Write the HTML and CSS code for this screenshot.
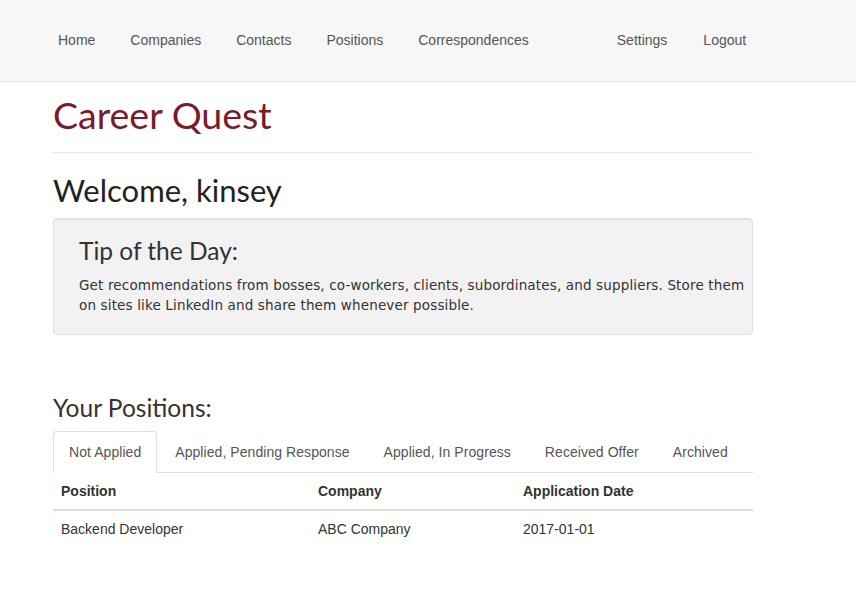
FILE: index.html
```html
<!DOCTYPE html>
<html>
<head>
<meta charset="utf-8">
<title>Career Quest</title>
<link rel="stylesheet" href="styles.css">
</head>
<body>
<nav class="navbar">
  <ul class="nav-left">
    <li><a href="#">Home</a></li>
    <li><a href="#">Companies</a></li>
    <li><a href="#">Contacts</a></li>
    <li><a href="#">Positions</a></li>
    <li><a href="#">Correspondences</a></li>
  </ul>
  <ul class="nav-right">
    <li><a href="#">Settings</a></li>
    <li><a href="#">Logout</a></li>
  </ul>
</nav>
<main class="container">
  <h1 class="brand">Career Quest</h1>
  <hr class="rule">
  <h2 class="welcome">Welcome, kinsey</h2>
  <section class="well">
    <h3 class="well-title">Tip of the Day:</h3>
    <p class="tip">Get recommendations from bosses, co-workers, clients, subordinates, and suppliers. Store them on sites like LinkedIn and share them whenever possible.</p>
  </section>
  <h3 class="section-title">Your Positions:</h3>
  <ul class="tabs">
    <li class="tab active"><a href="#">Not Applied</a></li>
    <li class="tab"><a href="#">Applied, Pending Response</a></li>
    <li class="tab"><a href="#">Applied, In Progress</a></li>
    <li class="tab"><a href="#">Received Offer</a></li>
    <li class="tab"><a href="#">Archived</a></li>
  </ul>
  <table class="table">
    <thead>
      <tr><th class="col-pos">Position</th><th class="col-co">Company</th><th>Application Date</th></tr>
    </thead>
    <tbody>
      <tr><td>Backend Developer</td><td>ABC Company</td><td>2017-01-01</td></tr>
    </tbody>
  </table>
</main>
</body>
</html>
```
FILE: styles.css
```css
* { box-sizing: border-box; }
html, body { margin: 0; padding: 0; }
body {
  font-family: "Liberation Sans", Arial, sans-serif;
  font-size: 14px;
  line-height: 20px;
  color: #333;
  background: #fff;
}
a { text-decoration: none; color: inherit; }
ul { list-style: none; margin: 0; padding: 0; }

.navbar {
  height: 82px;
  background: #f7f7f7;
  border-bottom: 1px solid #e3e3e3;
  display: flex;
  align-items: center;
  padding-left: 43px;
  padding-bottom: 2px;
}
.navbar ul { display: flex; }
.navbar a {
  display: block;
  padding: 10px 15px;
  color: #555;
  font-size: 14px;
}
.nav-left li + li { margin-left: 5px; }
.nav-right { margin-left: 58px; }
.nav-right li + li { margin-left: 6px; }

.container {
  width: 700px;
  margin-left: 53px;
}

.brand {
  font-family: "Lato", "Open Sans", sans-serif;
  font-weight: 400;
  font-size: 37.5px;
  line-height: 44px;
  color: #7b1b2d;
  margin: 11px 0 0 0;
}
.rule {
  border: 0;
  border-top: 1px solid #e8e8e8;
  margin: 15px 0 0 0;
}
.welcome {
  font-family: "Lato", "Open Sans", sans-serif;
  font-weight: 400;
  font-size: 31px;
  line-height: 36px;
  color: #222;
  margin: 19px 0 0 0;
}
.well {
  margin-top: 10px;
  background: #f2f2f2;
  border: 1px solid #e0e0e0;
  border-radius: 4px;
  box-shadow: inset 0 1px 1px rgba(0,0,0,0.05);
  padding: 18px 0 20px 25px;
  height: 117px;
}
.well-title {
  font-family: "Lato", "Open Sans", sans-serif;
  font-weight: 400;
  font-size: 24.5px;
  line-height: 28px;
  color: #333;
  margin: 0;
}
.tip {
  font-family: "DejaVu Sans", Verdana, sans-serif;
  font-size: 13.5px;
  letter-spacing: 0.15px;
  line-height: 20px;
  color: #333;
  margin: 10px 0 0 0;
}
.section-title {
  font-family: "Lato", "Open Sans", sans-serif;
  font-weight: 400;
  font-size: 24.5px;
  line-height: 28px;
  color: #333;
  margin: 59px 0 0 0;
}
.tabs {
  display: flex;
  margin-top: 9px;
  border-bottom: 1px solid #ddd;
}
.tab { margin-right: 2px; margin-bottom: -1px; }
.tab a {
  display: block;
  padding: 10px 15px;
  line-height: 20px;
  letter-spacing: 0.06px;
  color: #555;
  border: 1px solid transparent;
  border-radius: 4px 4px 0 0;
}
.tab.active a {
  background: #fff;
  border-color: #ddd #ddd transparent #ddd;
}
.table {
  width: 100%;
  border-collapse: collapse;
  border-spacing: 0;
}
.table th, .table td {
  text-align: left;
  padding: 8px;
  line-height: 20px;
}
.table th {
  font-weight: bold;
  border-bottom: 2px solid #ddd;
}
.col-pos { width: 257px; }
.col-co { width: 205px; }
```
